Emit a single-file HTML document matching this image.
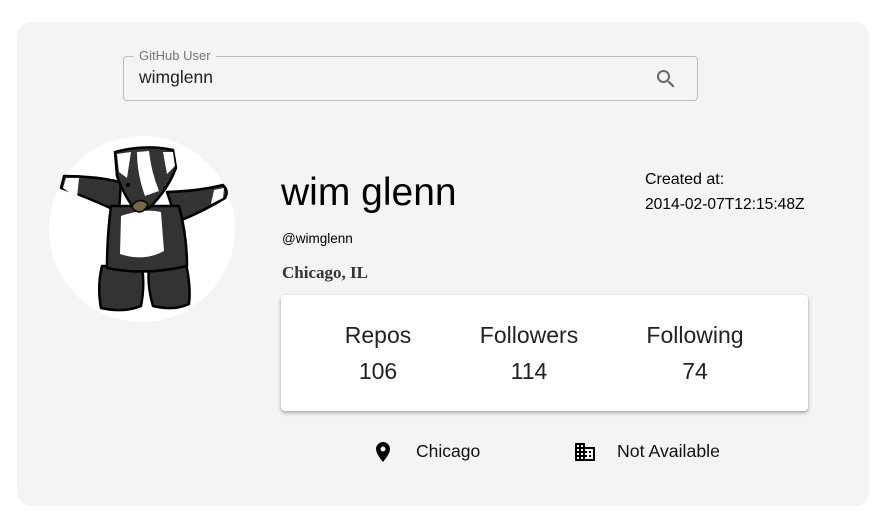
<!DOCTYPE html>
<html><head><meta charset="utf-8"><style>
*{margin:0;padding:0;box-sizing:border-box}
body{width:883px;height:529px;background:#fff;font-family:"Liberation Sans",Arial,sans-serif;position:relative;overflow:hidden}
.card{position:absolute;left:17px;top:22px;width:852px;height:484px;background:#f4f4f4;border-radius:14px}
.field{position:absolute;left:123px;top:56px;width:575px;height:45px;border:1px solid #bdbdbd;border-radius:4px}
.field .lbl{position:absolute;left:10px;top:-9px;background:#f4f4f4;padding:0 5px;font-size:13px;color:#757575}
.field .val{position:absolute;left:15px;top:10px;font-size:17.5px;color:#222}
.abs{position:absolute}
.stats{position:absolute;left:281px;top:295px;width:527px;height:116px;background:#fff;border-radius:4px;box-shadow:0 2px 4px rgba(0,0,0,.25),0 1px 2px rgba(0,0,0,.15)}
.st{position:absolute;text-align:center;font-size:23px;color:#222;transform:translateX(-50%);white-space:nowrap}
</style></head><body>
<div class="card"></div>
<div class="field"><span class="lbl">GitHub User</span><span class="val">wimglenn</span>
<svg class="abs" style="left:530px;top:10px" width="24" height="24" viewBox="0 0 24 24"><path fill="#666" d="M15.5 14h-.79l-.28-.27A6.47 6.47 0 0 0 16 9.5 6.5 6.5 0 1 0 9.5 16c1.61 0 3.09-.59 4.230-1.57l.27.28v.79l5 4.99L20.49 19l-4.99-5zm-6 0C7.01 14 5 11.99 5 9.5S7.01 5 9.5 5 14 7.01 14 9.5 11.99 14 9.5 14z"/></svg></div>
<svg class="abs" style="left:49px;top:136px" width="186" height="186" viewBox="0 0 186 186">
<circle cx="93" cy="93" r="93" fill="#fff"/>
<g stroke="#000" stroke-width="2.5" fill="#333" stroke-linejoin="round">
<path d="M15 40 Q45 40 72 46 L70 76 Q40 62 12 52 Z"/>
<path d="M118 56 Q150 55 174 49 Q180 55 176 62 Q155 75 128 86 Z"/>
<path d="M53 130 Q48 150 52 172 Q75 177 92 170 Q96 150 93 130 Z"/>
<path d="M100 130 Q98 150 104 170 Q125 175 140 168 Q142 150 137 128 Z"/>
<path d="M62 70 Q58 100 58 132 Q95 140 138 130 Q138 100 130 70 Z"/>
<path d="M66 16 Q95 8 124 14 L127 32 Q118 55 100 72 L87 75 Q75 60 68 40 Z"/>
</g>
<path d="M72 80 Q95 72 112 76 L115 115 Q95 126 71 118 Z" fill="#fff"/>
<path d="M88 16 L100 15 Q102 35 110 55 L96 60 Q88 38 88 16 Z" fill="#fff"/>
<path d="M68 18 L82 16 L78 42 L70 36 Z" fill="#fff"/>
<path d="M114 16 L124 16 L126 30 L118 38 Z" fill="#fff"/>
<path d="M17 42 L30 42 L28 62 L14 52 Z" fill="#fff"/>
<path d="M165 54 L175 52 L174 62 L162 68 Z" fill="#fff"/>
<circle cx="79" cy="49" r="2" fill="#000"/><circle cx="116" cy="52" r="2" fill="#000"/>
<path d="M83 70 Q90 60 99 68 Q96 76 90 76 Q84 75 83 70 Z" fill="#7a6545" stroke="#000" stroke-width="1.5"/>
</svg>
<div class="abs" style="left:281px;top:171px;font-size:39px;color:#000">wim glenn</div>
<div class="abs" style="left:282px;top:231px;font-size:13.5px;color:#000">@wimglenn</div>
<div class="abs" style="left:282px;top:263px;font-size:17px;font-family:'Liberation Serif',serif;font-weight:bold;color:#333">Chicago, IL</div>
<div class="abs" style="left:645px;top:171px;font-size:16px;color:#000">Created at:</div>
<div class="abs" style="left:645px;top:196px;font-size:15.6px;color:#000">2014-02-07T12:15:48Z</div>
<div class="stats">
<div class="st" style="left:97px;top:27px">Repos</div><div class="st" style="left:97px;top:63px">106</div>
<div class="st" style="left:248px;top:27px">Followers</div><div class="st" style="left:248px;top:63px">114</div>
<div class="st" style="left:414px;top:27px">Following</div><div class="st" style="left:414px;top:63px">74</div>
</div>
<svg class="abs" style="left:371px;top:440px" width="24" height="24" viewBox="0 0 24 24"><path d="M12 2C8.13 2 5 5.13 5 9c0 5.25 7 13 7 13s7-7.75 7-13c0-3.870-3.13-7-7-7zm0 9.5a2.5 2.5 0 0 1 0-5 2.5 2.5 0 0 1 0 5z"/></svg>
<div class="abs" style="left:416px;top:441px;font-size:17.5px;color:#111">Chicago</div>
<svg class="abs" style="left:573px;top:440px" width="24" height="24" viewBox="0 0 24 24"><path d="M12 7V3H2v18h20V7H12zM6 19H4v-2h2v2zm0-4H4v-2h2v2zm0-4H4V9h2v2zm0-4H4V5h2v2zm4 12H8v-2h2v2zm0-4H8v-2h2v2zm0-4H8V9h2v2zm0-4H8V5h2v2zm10 12h-8v-2h2v-2h-2v-2h2v-2h-2V9h8v10zm-2-8h-2v2h2v-2zm0 4h-2v2h2v-2z"/></svg>
<div class="abs" style="left:617px;top:441px;font-size:17.7px;color:#111">Not Available</div>
</body></html>
